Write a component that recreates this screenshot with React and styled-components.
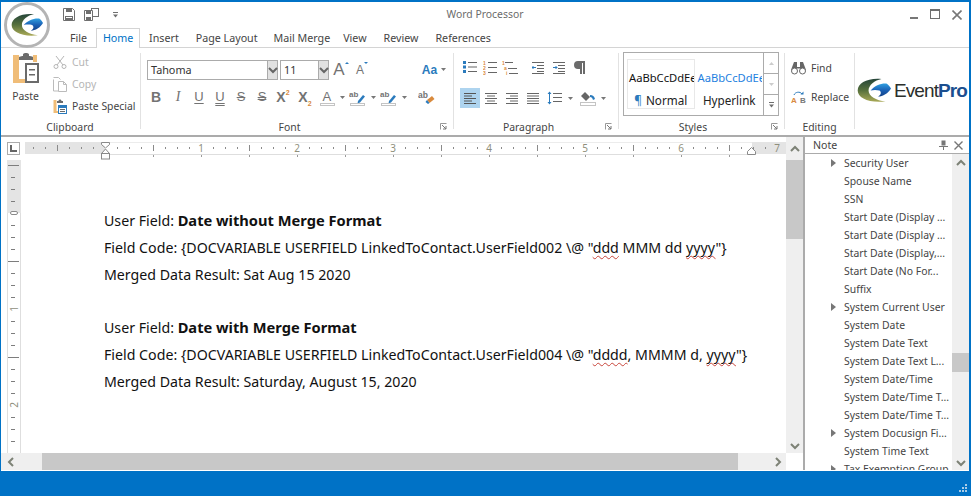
import React from "react";
import styled, { createGlobalStyle } from "styled-components";

const Global = createGlobalStyle`
  html, body { margin: 0; padding: 0; background: #fff; }
  body { font-family: "Noto Sans", "Liberation Sans", sans-serif; overflow: hidden; }
  svg { display: block; flex: none; }
`;

const GRAY = "#6f6f6f";
const BLUE = "#2b7bbd";
const ORANGE = "#d98a3d";

const Window = styled.div`
  width: 971px; height: 496px; box-sizing: border-box;
  border-top: 2px solid #0072c6; border-left: 1px solid #0072c6; border-right: 2px solid #0072c6;
  display: flex; flex-direction: column; position: relative; background: #fff; overflow: hidden;
`;
const TitleBar = styled.div`
  height: 26px; display: grid; grid-template-columns: 1fr auto 1fr; align-items: center; flex: none;
`;
const Qat = styled.div`
  display: flex; align-items: center; gap: 9px; padding-left: 62px; margin-top: -1px;
`;
const QatCaret = styled.span`
  margin-left: 5px;
`;
const Title = styled.div`
  font-size: 10.4px; color: #6b6b6b; margin-top: -3px;
`;
const WinButtons = styled.div`
  display: flex; justify-content: flex-end; gap: 11px; padding-right: 7px; align-items: center; margin-top: -1px;
`;
const TabRow = styled.div`
  height: 19px; flex: none; display: flex; padding-left: 69px; border-bottom: 1px solid #d4d4d4; box-sizing: content-box;
`;
const Tab = styled.div`
  font-size: 10.7px; color: ${p => (p.$active ? "#0072c6" : "#444")};
  margin-right: ${p => p.$mr}px; white-space: nowrap;
  background: #fff; box-sizing: border-box;
  line-height: 21px; height: 19px;
  ${p => p.$active ? "width: 44px; text-align: center; line-height: 19px; height: 20px; border: 1px solid #d4d4d4; border-bottom: none; position: relative; z-index: 1;" : ""}
`;
const Ribbon = styled.div`
  height: 87px; flex: none; display: flex; border-bottom: 2px solid #ababab; box-sizing: content-box; padding-left: 2px;
`;
const Group = styled.div`
  width: ${p => p.$w}px; flex: none; box-sizing: border-box; height: 76px; margin-top: 5px;
  border-right: 1px solid ${p => (p.$noline ? "transparent" : "#e2e2e2")};
  display: flex; flex-direction: column; position: relative;
`;
const GroupBody = styled.div`
  height: 67px; flex: none; position: relative; display: flex;
`;
const GroupLabel = styled.div`
  font-size: 10.4px; line-height: 15px; height: 15px; flex: none; text-align: center; color: #444;
  padding-right: ${p => p.$pr || 0}px;
`;
const Launcher = styled.span`
  position: absolute; right: 6px; bottom: -1px; display: flex;
`;

/* clipboard */
const PasteBig = styled.div`
  width: 45px; flex: none; display: flex; flex-direction: column; align-items: center; font-size: 10.4px; color: #444;
  span { margin-top: 6px; line-height: 14px; }
`;
const SmallCol = styled.div`
  display: flex; flex-direction: column; gap: ${p => p.$gap || 0}px; padding: ${p => p.$pad || "0 0 0 5px"}; margin-top: ${p => p.$mt || 0}px;
`;
const SmallBtn = styled.div`
  height: 22px; display: flex; align-items: center; gap: 5px; font-size: 10.4px; color: ${p => (p.$off ? "#b5b5b5" : "#444")}; white-space: nowrap;
`;

/* font */
const Rows = styled.div`
  display: flex; flex-direction: column; padding: ${p => p.$pad}; width: 100%; box-sizing: border-box;
`;
const Row = styled.div`
  display: flex; align-items: center; height: ${p => p.$h || 22}px; margin-bottom: ${p => p.$mb || 0}px;
`;
const Combo = styled.div`
  width: ${p => p.$w}px; height: 20px; box-sizing: border-box; border: 1px solid #ababab;
  display: flex; align-items: center; font-size: 10.8px; color: #333; padding-left: 3px;
  margin-right: ${p => p.$mr || 0}px; position: relative; background: #fff;
`;
const ComboArrow = styled.span`
  position: absolute; right: 0; top: 0; bottom: 0; width: 9px; background: #e1e1e1; border-left: 1px solid #ababab;
  display: flex; align-items: center; justify-content: center;
`;
const IconBtn = styled.span`
  width: ${p => p.$w || 22}px; height: ${p => p.$h || 22}px; display: flex; align-items: center; justify-content: center; flex: none;
  margin-right: ${p => p.$mr || 0}px; margin-left: ${p => p.$ml || 0}px;
  ${p => (p.$on ? "background: #aed4ef;" : "")}
`;

/* styles */
const Gallery = styled.div`
  margin: -1px 0 0 4px; width: 156px; height: 64px; box-sizing: border-box; border: 1px solid #ababab; display: flex;
`;
const StyleCell = styled.div`
  width: 69px; margin: ${p => (p.$sel ? "6px 0 0 3px" : "6px 0 0 1px")}; height: 50px; box-sizing: border-box; overflow: hidden;
  border: 1px solid ${p => (p.$sel ? "#e8e8e8" : "transparent")};
  display: flex; flex-direction: column; align-items: center; padding-top: 11px;
  color: ${p => p.$color};
`;
const StyleSample = styled.div`
  line-height: 14px; white-space: nowrap; font-size: 11.2px; align-self: flex-start; padding-left: 1px;
`;
const StyleName = styled.div`
  margin-top: 8px; line-height: 15px; font-size: 11.7px; color: #222; white-space: nowrap;
`;
const StyleMark = styled.span`
  color: ${BLUE}; margin-right: 1px;
`;
const GalleryScroll = styled.div`
  width: 14px; margin-left: auto; border-left: 1px solid #ababab; display: flex; flex-direction: column; flex: none;
`;
const GalleryBtn = styled.div`
  flex: 1; display: flex; align-items: center; justify-content: center; border-bottom: ${p => (p.$last ? "none" : "1px solid #ababab")};
`;

/* logo */
const LogoWrap = styled.div`
  display: flex; align-items: center; padding: 25px 0 0 2px; gap: 3px;
`;
const LogoText = styled.div`
  font-size: 19px; line-height: 22px; letter-spacing: -0.9px; color: #2b2f2c; font-family: "Liberation Sans", sans-serif; white-space: nowrap;
  b { color: #1b4f8f; font-weight: 700; }
`;

/* Main */
const Main = styled.div`
  flex: 1; display: flex; min-height: 0;
`;
const DocPane = styled.div`
  width: 802px; flex: none; display: grid;
  grid-template-columns: 1fr 17px; grid-template-rows: 1fr 17px; border-right: 2px solid #ababab; box-sizing: content-box;
`;
const DocArea = styled.div`
  position: relative; overflow: hidden; display: grid; grid-template-columns: 24px 1fr; grid-template-rows: 23px 1fr;
`;
const Corner = styled.div`
  padding: 5px 0 0 6px;
`;
const LButton = styled.div`
  width: 13px; height: 13px; box-sizing: border-box; border: 1px solid #ababab; display: flex; align-items: center; justify-content: center;
`;
const RulerH = styled.div`
  padding-top: 5px;
`;
const RulerV = styled.div`
  padding-left: 6px;
`;
const Page = styled.div`
  padding: 47px 0 0 79px; font-size: 14.2px; line-height: 27px; color: #111; white-space: nowrap;
  font-family: "Noto Sans", sans-serif;
  b { font-size: 14.67px; }
`;
const Para = styled.div`
  margin-bottom: 26px;
`;
const Squiggle = styled.span`
  text-decoration: underline wavy #c8453b 1px; text-underline-offset: 2px; text-decoration-skip-ink: none;
`;
const VScroll = styled.div`
  background: #efefef; display: flex; flex-direction: column; align-items: center;
  ${p => p.$w ? `width: ${p.$w}px; flex: none;` : ""}
`;
const ScrollBtn = styled.div`
  height: ${p => p.$h}px; width: 100%; flex: none; display: flex; align-items: center; justify-content: center;
`;
const ScrollFill = styled.div`
  flex: 1;
`;
const VThumb = styled.div`
  height: ${p => p.$h}px; width: 100%; background: #c8c8c8; flex: none; margin-top: ${p => p.$mt || 0}px;
`;
const HScroll = styled.div`
  background: #efefef; display: flex;
`;
const HLeft = styled.div`
  width: 41px; display: flex; align-items: center; padding-left: 6px; box-sizing: border-box; flex: none;
`;
const HThumb = styled.div`
  width: 696px; background: #c8c8c8; flex: none;
`;
const HRight = styled.div`
  flex: 1; display: flex; align-items: center; justify-content: flex-end; padding-right: 4px;
`;
const CornerBox = styled.div`
  background: #fff;
`;

const NotePane = styled.div`
  flex: 1; min-width: 0; display: flex; flex-direction: column;
`;
const NoteHead = styled.div`
  height: 16px; flex: none; display: flex; align-items: center; font-size: 10.6px; color: #444; padding: 0 6px 0 8px;
  border-bottom: 1px solid #ababab; gap: 6px;
`;
const NoteTitle = styled.span`
  flex: 1;
`;
const NoteBody = styled.div`
  flex: 1; display: flex; min-height: 0; overflow: hidden;
`;
const Tree = styled.div`
  flex: 1; padding: 0 0 0 39px; overflow: hidden; min-width: 0;
`;
const TreeItem = styled.div`
  height: 18px; line-height: 18px; font-size: 10.4px; color: #444; white-space: nowrap; position: relative;
`;
const TreeArrow = styled.span`
  position: absolute; left: -13px; top: 5px; display: flex;
`;
const Status = styled.div`
  height: 22px; flex: none; background: #0072c6; margin: 1px -2px 0 -1px; display: flex; justify-content: flex-end; align-items: flex-end; padding: 0 3px 3px 0;
`;
const AppBadge = styled.div`
  position: absolute; left: 3px; top: 0; width: 46px; height: 46px; z-index: 3; display: flex;
`;

const Svg = ({ w = 16, h = 16, children }) => (
  <svg width={w} height={h} viewBox={`0 0 ${w} ${h}`} fill="none">{children}</svg>
);

const SwooshArt = ({ id }) => (
  <>
    <defs>
      <linearGradient id={`${id}c`} x1="0" y1="0" x2="0" y2="1">
        <stop offset="0" stopColor="#25453a" />
        <stop offset="0.5" stopColor="#56703c" />
        <stop offset="1" stopColor="#a9a957" />
      </linearGradient>
      <linearGradient id={`${id}b`} x1="0" y1="0" x2="0" y2="1">
        <stop offset="0" stopColor="#2f9fe0" />
        <stop offset="0.5" stopColor="#1b62b6" />
        <stop offset="1" stopColor="#123f86" />
      </linearGradient>
    </defs>
    <path d="M36 1C16-1 1 7 1 18 1 29 18 37 42 34 28 33 17 26 17 18 17 10 26 3 36 1Z" fill={`url(#${id}c)`} />
    <path d="M20 18C26 11 36 7 44 8 47 10 49 13 50 15 46 22 38 27 31 27 36 24 36 20 33 18 29 17 24 17 20 18Z" fill={`url(#${id}b)`} />
  </>
);

const Down = ({ c = "#777" }) => <Svg w={5} h={3}><path d="M0 0h5L2.5 3z" fill={c} /></Svg>;
const Chev = ({ dir = "up", c = "#7d8276" }) => {
  const d = { up: "M1 6l4-4 4 4", down: "M1 2l4 4 4-4", left: "M6 1L2 5l4 4", right: "M3 1l4 4-4 4" }[dir];
  const isV = dir === "up" || dir === "down";
  return <Svg w={isV ? 10 : 9} h={isV ? 8 : 10}><path d={d} stroke={c} strokeWidth="2" /></Svg>;
};

const SaveIcon = () => (
  <Svg w={12} h={13}>
    <path d="M.5.5h9l2 2v10H.5z" stroke={GRAY} fill="#fff" />
    <rect x="3" y="0" width="6" height="4" fill={GRAY} />
    <rect x="2" y="8" width="8" height="5" fill={GRAY} />
    <rect x="3" y="9" width="6" height="1" fill="#fff" />
  </Svg>
);
const SaveAllIcon = () => (
  <Svg w={15} h={13}>
    <rect x="7.5" y=".5" width="7" height="8" stroke={GRAY} fill="#fff" />
    <path d="M.5 2.5h8v10h-8z" stroke={GRAY} fill="#fff" />
    <rect x="2" y="3" width="5" height="3" fill={GRAY} />
    <rect x="2" y="9" width="5" height="3" fill={GRAY} />
  </Svg>
);
const QatDown = () => (
  <Svg w={5} h={6}><rect width="5" height="1" fill={GRAY} /><path d="M0 2.5h5L2.5 5.5z" fill={GRAY} /></Svg>
);

const PasteIcon = () => (
  <Svg w={27} h={30}>
    <path d="M1 2h6v24h7v4H1z" fill="#f0bd78" />
    <path d="M21 2h4v7h-4z" fill="#f0bd78" />
    <path d="M7 4c2-1 3-1 4-1V1.500c0-2 6-2 6 0V3c1 0 3 0 4 1v3H7z" fill="#6b6b6b" />
    <rect x="14" y="11" width="12" height="18" fill="#fff" stroke="#6b6b6b" strokeWidth="2" />
    <rect x="17" y="16" width="6" height="1.500" fill="#6b6b6b" />
    <rect x="17" y="21" width="6" height="1.500" fill="#6b6b6b" />
  </Svg>
);
const CutIcon = () => (
  <Svg w={14} h={14}>
    <path d="M3 1l7 9M11 1L4 10" stroke="#b5b5b5" />
    <circle cx="3" cy="11.500" r="2" stroke="#b5b5b5" /><circle cx="11" cy="11.500" r="2" stroke="#b5b5b5" />
  </Svg>
);
const CopyIcon = () => (
  <Svg w={14} h={15}>
    <path d="M.5 2.500V14h5" stroke="#bbb" />
    <path d="M.5.500h5l2 2" stroke="#bbb" />
    <path d="M5.500 4.500h5l3 3v7h-8z" stroke="#bbb" fill="#fff" />
    <path d="M10.500 4.500v3h3" stroke="#bbb" />
  </Svg>
);
const PasteSmall = () => (
  <Svg w={14} h={15}>
    <path d="M.5 1h3v11h3v2H.500z" fill="#f0bd78" />
    <path d="M4 2h1.500c0-2 3-2 3 0H10v2H4z" fill="#6b6b6b" />
    <rect x="5.500" y="6.500" width="8" height="8" fill="#fff" stroke={BLUE} />
    <rect x="5" y="6" width="9" height="3" fill={BLUE} />
    <rect x="7" y="10" width="5" height="1" fill="#6b6b6b" /><rect x="7" y="12" width="5" height="1" fill="#6b6b6b" />
  </Svg>
);

const FmtIcon = styled.span`
  font-family: ${p => p.$serif ? '"Liberation Serif", serif' : '"Liberation Sans", sans-serif'};
  font-size: ${p => p.$s || 14}px; line-height: 14px; color: ${p => p.$c || "#737373"}; font-weight: ${p => p.$b ? 700 : 400}; font-style: ${p => p.$i ? "italic" : "normal"};
  position: relative; display: inline-block;
  text-decoration: ${p => p.$d || "none"};
  text-decoration-thickness: 1px; text-underline-offset: 2px;
  ${p => p.$dbl ? "text-decoration-style: double;" : ""}
`;
const SupSub = styled.sup`
  font-size: 7px; line-height: 7px; color: ${ORANGE}; font-weight: 700; position: absolute; left: 100%; ${p => p.$sub ? "bottom: -3px;" : "top: -1px;"}
`;
const SizeMark = styled.span`
  position: absolute; left: 100%; top: -1px; width: 0; height: 0;
  border-left: 2px solid transparent; border-right: 2px solid transparent;
  ${p => p.$grow ? `border-bottom: 2px solid ${BLUE};` : `border-top: 2px solid ${BLUE};`}
`;

const ColorA = ({ ab }) => (
  <Svg w={17} h={17}>
    {ab ? (
      <>
        <text x="0" y="8" fontSize="8" fill="#737373" fontFamily="Liberation Sans" fontWeight="700">ab</text>
        <path d="M9 12l5-6 2 1.500-5 6-2.500 1z" fill={BLUE} />
      </>
    ) : (
      <text x="3.500" y="12" fontSize="13" fill="#737373" fontFamily="Liberation Sans">A</text>
    )}
    <rect x="1.500" y="14.500" width="14" height="2" stroke="#c4c4c4" fill="#fff" />
  </Svg>
);
const ClearFmt = () => (
  <Svg w={17} h={15}>
    <text x="0" y="8" fontSize="8.500" fill="#737373" fontFamily="Liberation Sans" fontWeight="700">ab</text>
    <path d="M9 10l5-4 2.500 3-5 4z" fill={ORANGE} />
    <path d="M9 10l-1.500 2 2.500 2 1.500-1z" fill={BLUE} />
  </Svg>
);
const Lines = ({ align = "left", on }) => {
  const rows = [0, 1, 2, 3, 4].map(i => {
    const short = i % 2 === 1;
    const full = 12;
    const len = align === "just" ? full : short ? 8 : full;
    const x = align === "center" ? (full - len) / 2 : align === "right" ? full - len : 0;
    return <rect key={i} x={x} y={i * 2.500} width={len} height="1" fill={on ? "#555" : "#666"} />;
  });
  return <Svg w={12} h={11}>{rows}</Svg>;
};
const Bullets = () => (
  <Svg w={15} h={13}>
    {[1, 5.500, 10].map(y => <React.Fragment key={y}><rect x="0" y={y - 1} width="3" height="3" fill={BLUE} /><rect x="5" y={y} width="9" height="1" fill="#666" /></React.Fragment>)}
  </Svg>
);
const Numbers = () => (
  <Svg w={15} h={14}>
    {[0, 5, 10].map((y, i) => <React.Fragment key={y}><text x="0" y={y + 4} fontSize="5" fontWeight="700" fill={ORANGE} fontFamily="Liberation Sans">{i + 1}</text><rect x="5" y={y + 1} width="9" height="1" fill="#666" /></React.Fragment>)}
  </Svg>
);
const Multi = () => (
  <Svg w={17} h={14}>
    <text x="0" y="4" fontSize="5" fontWeight="700" fill={ORANGE} fontFamily="Liberation Sans">1</text><rect x="3" y="1" width="8" height="1" fill="#666" />
    <text x="2" y="9" fontSize="5" fontWeight="700" fill={ORANGE} fontFamily="Liberation Sans">a</text><rect x="6" y="7" width="9" height="1" fill="#666" />
    <text x="4" y="14" fontSize="5" fontWeight="700" fill={ORANGE} fontFamily="Liberation Sans">i</text><rect x="7" y="12" width="9" height="1" fill="#666" />
  </Svg>
);
const Indent = ({ inc }) => (
  <Svg w={13} h={12}>
    {[0, 3, 6, 9, 11].map(y => <rect key={y} x={y === 0 || y === 11 ? 0 : 5} y={y} width={y === 0 || y === 11 ? 12 : 7} height="1" fill="#666" />)}
    <path d={inc ? "M0 5.500h4M2.500 4l1.500 1.500L2.500 7" : "M4 5.500H0M1.500 4L0 5.500 1.500 7"} stroke={BLUE} />
  </Svg>
);
const Pilcrow = () => (
  <Svg w={13} h={13}>
    <path d="M12 0H5a4 4 0 0 0 0 8h2v5h2V2h1v11h2V2z" fill="#6b6b6b" />
  </Svg>
);
const LineSpacing = () => (
  <Svg w={15} h={14}>
    <path d="M2.500 1v12" stroke={BLUE} /><path d="M.5 3l2-2.500 2 2.500zM.5 11l2 2.500 2-2.500z" fill={BLUE} />
    {[3, 7, 11].map(y => <rect key={y} x="6" y={y - 1} width="9" height="1" fill="#666" />)}
  </Svg>
);
const Shading = () => (
  <Svg w={16} h={15}>
    <path d="M1 5l4-4 5 5-4 4z" fill="#666" />
    <path d="M10 4c3 0 4 1 5 4l-2 1c-.5-2-1.500-3-3-3z" fill={BLUE} />
    <rect x=".5" y="11.500" width="15" height="3" stroke="#c4c4c4" fill="#fff" />
  </Svg>
);
const LauncherIcon = () => (
  <Svg w={7} h={7}>
    <path d="M.5 6.500V.5h6" stroke="#999" /><path d="M2 2l4 4M6 3v3H3" stroke="#777" />
  </Svg>
);
const Binoculars = () => (
  <Svg w={15} h={13}>
    <path d="M3 0h3v5h3V0h3l3 8H9V6.500H6V8H0z" fill="#666" />
    <circle cx="3.500" cy="9" r="3" fill="#fff" stroke="#666" /><circle cx="11.500" cy="9" r="3" fill="#fff" stroke="#666" />
  </Svg>
);
const ReplaceIcon = () => (
  <Svg w={15} h={13}>
    <text x="0" y="12" fontSize="8" fontWeight="700" fill={ORANGE} fontFamily="Liberation Sans">A</text>
    <text x="9" y="12" fontSize="8" fontWeight="700" fill="#777" fontFamily="Liberation Sans">B</text>
    <path d="M3 4C4 1 9 0 11 3" stroke={BLUE} /><path d="M9.500 3.500h3V.5z" fill={BLUE} />
  </Svg>
);

const RulerTop = () => {
  const ticks = [];
  for (let x = 8; x < 760; x += 12) {
    const rel = x - 80;
    if (rel % 96 === 0) continue;
    const half = ((rel % 48) + 48) % 48 === 0;
    ticks.push(<rect key={x} x={x} y={half ? 3 : 5} width="1" height={half ? 6 : 2} fill="#8a8a8a" />);
  }
  const lows = [];
  for (let x = 128; x < 730; x += 48) lows.push(<rect key={x} x={x} y="13" width="1" height="2" fill="#9a9a9a" />);
  return (
    <svg width="778" height="18" viewBox="0 0 778 18">
      <rect x="0" y="0" width="80" height="12" fill="#e4e4e4" />
      <rect x="727" y="0" width="34" height="12" fill="#e4e4e4" />
      <rect x="80" y="0" width="647" height="1" fill="#ececec" />
      <rect x="80" y="12" width="647" height="1" fill="#dedede" />
      {ticks}
      {lows}
      {[1, 2, 3, 4, 5, 6, 7].map(n => (
        <text key={n} x={80 + n * 96} y="10" textAnchor="middle" fontSize="10" fill="#8f8f7c" fontFamily="Noto Sans">{n}</text>
      ))}
      <path d="M76.500 .5h8v2L80.500 6 76.500 2.500z" fill="#fff" stroke="#8a8a8a" />
      <path d="M76.500 11.500L80.500 7l4 4.500z" fill="#fff" stroke="#8a8a8a" />
      <rect x="76.500" y="11.500" width="8" height="5.500" fill="#fff" stroke="#8a8a8a" />
      <path d="M722.500 12.500v-3l4-4 4 4v3z" fill="#fff" stroke="#8a8a8a" />
    </svg>
  );
};
const RulerLeft = () => {
  const items = [];
  for (let i = -4; i <= 20; i++) {
    const y = 53 + i * 12;
    if (i === 0 || i === 8 || i === 16) continue;
    const long = i % 4 === 0;
    items.push(<rect key={i} x={long ? 1 : 4} y={y} width={long ? 11 : 4} height="1" fill="#7d7d7d" />);
  }
  return (
    <svg width="14" height="296" viewBox="0 0 14 296">
      <rect x="0" y="0" width="14" height="53" fill="#e4e4e4" />
      <rect x="0" y="53" width="1" height="243" fill="#dedede" />
      <rect x="13" y="53" width="1" height="243" fill="#dedede" />
      {items}
      <rect x="3.500" y="51.500" width="7" height="3" rx="1.500" fill="#fff" stroke="#8a8a8a" />
      <text transform="translate(10.500 149) rotate(-90)" textAnchor="middle" fontSize="10" fill="#8f8f7c" fontFamily="Noto Sans">1</text>
      <text transform="translate(10.500 245) rotate(-90)" textAnchor="middle" fontSize="10" fill="#8f8f7c" fontFamily="Noto Sans">2</text>
    </svg>
  );
};

const TREE = [
  ["Security User", 1], ["Spouse Name"], ["SSN"], ["Start Date (Display ..."], ["Start Date (Display ..."],
  ["Start Date (Display,..."], ["Start Date (No For..."], ["Suffix"], ["System Current User", 1], ["System Date"],
  ["System Date Text"], ["System Date Text L..."], ["System Date/Time"], ["System Date/Time T..."], ["System Date/Time T..."],
  ["System Docusign Fi...", 1], ["System Time Text"], ["Tax Exemption Group", 1],
];

export default function App() {
  return (
    <>
      <Global />
      <Window>
        <AppBadge>
          <svg width="46" height="46" viewBox="0 0 46 46">
            <circle cx="23" cy="23" r="21.500" fill="#fff" stroke="#b4b4b4" strokeWidth="3" />
            <svg x="7" y="11" width="32" height="24" viewBox="0 0 50 36">
              <SwooshArt id="a" />
            </svg>
          </svg>
        </AppBadge>
        <TitleBar>
          <Qat>
            <SaveIcon />
            <SaveAllIcon />
            <QatCaret><QatDown /></QatCaret>
          </Qat>
          <Title>Word Processor</Title>
          <WinButtons>
            <Svg w={10} h={12}><rect x="1" y="8" width="8" height="2" fill="#777" /></Svg>
            <Svg w={11} h={11}><rect x=".5" y="1" width="9" height="8.500" stroke="#6f6f6f" /><rect x="0" y="0" width="10" height="2" fill="#6f6f6f" /></Svg>
            <Svg w={10} h={10}><path d="M.5.5l9 9M9.500.5l-9 9" stroke="#777" strokeWidth="1.600" /></Svg>
          </WinButtons>
        </TitleBar>
        <TabRow>
          <Tab $mr={9}>File</Tab>
          <Tab $active $mr={9}>Home</Tab>
          <Tab $mr={17}>Insert</Tab>
          <Tab $mr={16}>Page Layout</Tab>
          <Tab $mr={13}>Mail Merge</Tab>
          <Tab $mr={17}>View</Tab>
          <Tab $mr={17}>Review</Tab>
          <Tab $mr={0}>References</Tab>
        </TabRow>
        <Ribbon>
          <Group $w={138}>
            <GroupBody>
              <PasteBig>
                <PasteIcon />
                <span>Paste</span>
              </PasteBig>
              <SmallCol $mt={-2}>
                <SmallBtn $off><CutIcon /><span>Cut</span></SmallBtn>
                <SmallBtn $off><CopyIcon /><span>Copy</span></SmallBtn>
                <SmallBtn><PasteSmall /><span>Paste Special</span></SmallBtn>
              </SmallCol>
            </GroupBody>
            <GroupLabel $pr={3}>Clipboard</GroupLabel>
          </Group>
          <Group $w={313}>
            <GroupBody>
              <Rows $pad="6px 0 0 6px">
                <Row $h={21} $mb={6}>
                  <Combo $w={131} $mr={2}>Tahoma<ComboArrow><Chev dir="down" c="#666" /></ComboArrow></Combo>
                  <Combo $w={49}>11<ComboArrow><Chev dir="down" c="#666" /></ComboArrow></Combo>
                  <IconBtn $w={20}>
                    <FmtIcon $s={17}>A<SizeMark $grow /></FmtIcon>
                  </IconBtn>
                  <IconBtn $w={18} $ml={2}>
                    <FmtIcon $s={12}>A<SizeMark /></FmtIcon>
                  </IconBtn>
                  <IconBtn $w={19} $ml={51}><FmtIcon $s={12} $b $c={BLUE}>Aa</FmtIcon></IconBtn>
                  <IconBtn $w={8}><Down /></IconBtn>
                </Row>
                <Row>
                  <IconBtn $w={16} $mr={6} $ml={1}><FmtIcon $b $s={14}>B</FmtIcon></IconBtn>
                  <IconBtn $w={16} $mr={5}><FmtIcon $i $s={14} $serif>I</FmtIcon></IconBtn>
                  <IconBtn $w={16} $mr={5}><FmtIcon $d="underline" $s={13}>U</FmtIcon></IconBtn>
                  <IconBtn $w={16} $mr={5}><FmtIcon $d="underline" $dbl $s={13}>U</FmtIcon></IconBtn>
                  <IconBtn $w={16} $mr={5}><FmtIcon $d="line-through" $s={13}>S</FmtIcon></IconBtn>
                  <IconBtn $w={16} $mr={3}><FmtIcon $d="line-through" $dbl $s={13}>S</FmtIcon></IconBtn>
                  <IconBtn $w={16} $mr={6}><FmtIcon $b $s={14}>X<SupSub>2</SupSub></FmtIcon></IconBtn>
                  <IconBtn $w={16} $mr={8}><FmtIcon $b $s={14}>X<SupSub $sub>2</SupSub></FmtIcon></IconBtn>
                  <IconBtn $w={17}><ColorA /></IconBtn>
                  <IconBtn $w={13}><Down /></IconBtn>
                  <IconBtn $w={17}><ColorA ab /></IconBtn>
                  <IconBtn $w={14}><Down /></IconBtn>
                  <IconBtn $w={17}><ColorA ab /></IconBtn>
                  <IconBtn $w={14}><Down /></IconBtn>
                  <IconBtn $w={17} $ml={7}><ClearFmt /></IconBtn>
                </Row>
              </Rows>
            </GroupBody>
            <GroupLabel $pr={15}>Font</GroupLabel>
            <Launcher><LauncherIcon /></Launcher>
          </Group>
          <Group $w={165}>
            <GroupBody>
              <Rows $pad="4px 0 0 6px">
                <Row $h={21} $mb={9}>
                  <IconBtn $w={20}><Bullets /></IconBtn>
                  <IconBtn $w={20}><Numbers /></IconBtn>
                  <IconBtn $w={20}><Multi /></IconBtn>
                  <IconBtn $w={22} $ml={7}><Indent /></IconBtn>
                  <IconBtn $w={20}><Indent inc /></IconBtn>
                  <IconBtn $w={18} $ml={1}><Pilcrow /></IconBtn>
                </Row>
                <Row>
                  <IconBtn $w={20} $h={20} $on><Lines on /></IconBtn>
                  <IconBtn $w={21}><Lines align="center" /></IconBtn>
                  <IconBtn $w={21}><Lines align="right" /></IconBtn>
                  <IconBtn $w={21}><Lines align="just" /></IconBtn>
                  <IconBtn $w={19} $ml={2}><LineSpacing /></IconBtn>
                  <IconBtn $w={12}><Down /></IconBtn>
                  <IconBtn $w={20} $ml={2}><Shading /></IconBtn>
                  <IconBtn $w={10}><Down /></IconBtn>
                </Row>
              </Rows>
            </GroupBody>
            <GroupLabel $pr={15}>Paragraph</GroupLabel>
            <Launcher><LauncherIcon /></Launcher>
          </Group>
          <Group $w={166}>
            <GroupBody>
              <Gallery>
                <StyleCell $sel $color="#111">
                  <StyleSample>AaBbCcDdEe</StyleSample>
                  <StyleName><StyleMark>¶</StyleMark> Normal</StyleName>
                </StyleCell>
                <StyleCell $color="#1e7fe0">
                  <StyleSample>AaBbCcDdEe</StyleSample>
                  <StyleName>Hyperlink</StyleName>
                </StyleCell>
                <GalleryScroll>
                  <GalleryBtn><Svg w={5} h={3}><path d="M0 3h5L2.500 0z" fill="#ccc" /></Svg></GalleryBtn>
                  <GalleryBtn><Down c="#ccc" /></GalleryBtn>
                  <GalleryBtn $last><QatDown /></GalleryBtn>
                </GalleryScroll>
              </Gallery>
            </GroupBody>
            <GroupLabel $pr={17}>Styles</GroupLabel>
            <Launcher><LauncherIcon /></Launcher>
          </Group>
          <Group $w={70}>
            <GroupBody>
              <SmallCol $pad="4px 0 0 6px" $gap={7}>
                <SmallBtn><Binoculars /><span>Find</span></SmallBtn>
                <SmallBtn><ReplaceIcon /><span>Replace</span></SmallBtn>
              </SmallCol>
            </GroupBody>
            <GroupLabel>Editing</GroupLabel>
          </Group>
          <Group $w={114} $noline>
            <LogoWrap>
              <svg width="34" height="25" viewBox="0 0 50 36"><SwooshArt id="b" /></svg>
              <LogoText>Event<b>Pro</b></LogoText>
            </LogoWrap>
          </Group>
        </Ribbon>
        <Main>
          <DocPane>
            <DocArea>
              <Corner><LButton><Svg w={7} h={7}><path d="M1 0v6h6" stroke="#666" strokeWidth="2" /></Svg></LButton></Corner>
              <RulerH><RulerTop /></RulerH>
              <RulerV><RulerLeft /></RulerV>
              <Page>
                <Para>
                  <div>User Field: <b>Date without Merge Format</b></div>
                  <div>Field Code: {"{"}DOCVARIABLE USERFIELD LinkedToContact.UserField002 \@ "<Squiggle>ddd</Squiggle> MMM dd <Squiggle>yyyy</Squiggle>"{"}"}</div>
                  <div>Merged Data Result: Sat Aug 15 2020</div>
                </Para>
                <Para>
                  <div>User Field: <b>Date with Merge Format</b></div>
                  <div>Field Code: {"{"}DOCVARIABLE USERFIELD LinkedToContact.UserField004 \@ "<Squiggle>dddd</Squiggle>, MMMM d, <Squiggle>yyyy</Squiggle>"{"}"}</div>
                  <div>Merged Data Result: Saturday, August 15, 2020</div>
                </Para>
              </Page>
            </DocArea>
            <VScroll>
              <ScrollBtn $h={23}><Chev dir="up" /></ScrollBtn>
              <VThumb $h={79} />
              <ScrollFill />
              <ScrollBtn $h={14}><Chev dir="down" /></ScrollBtn>
            </VScroll>
            <HScroll>
              <HLeft><Chev dir="left" /></HLeft>
              <HThumb />
              <HRight><Chev dir="right" /></HRight>
            </HScroll>
            <CornerBox />
          </DocPane>
          <NotePane>
            <NoteHead>
              <NoteTitle>Note</NoteTitle>
              <Svg w={9} h={10}><path d="M2.500.5h4v5h-4zM0 6h9v1H0zM4 7h1v3H4z" fill="#777" /></Svg>
              <Svg w={9} h={9}><path d="M.5.5l8 8M8.500.5l-8 8" stroke="#777" strokeWidth="1.400" /></Svg>
            </NoteHead>
            <NoteBody>
              <Tree>
                {TREE.map(([t, arrow], i) => (
                  <TreeItem key={i}>
                    {arrow ? <TreeArrow><Svg w={5} h={8}><path d="M0 0l5 4-5 4z" fill="#777" /></Svg></TreeArrow> : null}
                    {t}
                  </TreeItem>
                ))}
              </Tree>
              <VScroll $w={17}>
                <ScrollBtn $h={17}><Chev dir="up" /></ScrollBtn>
                <VThumb $h={19} $mt={182} />
                <ScrollFill />
                <ScrollBtn $h={14}><Chev dir="down" /></ScrollBtn>
              </VScroll>
            </NoteBody>
          </NotePane>
        </Main>
        <Status>
          <Svg w={9} h={9}>
            {[[6, 0], [3, 3], [6, 3], [0, 6], [3, 6], [6, 6]].map(([x, y]) => <rect key={`${x}${y}`} x={x} y={y} width="2" height="2" fill="#a8cbe6" />)}
          </Svg>
        </Status>
      </Window>
    </>
  );
}
